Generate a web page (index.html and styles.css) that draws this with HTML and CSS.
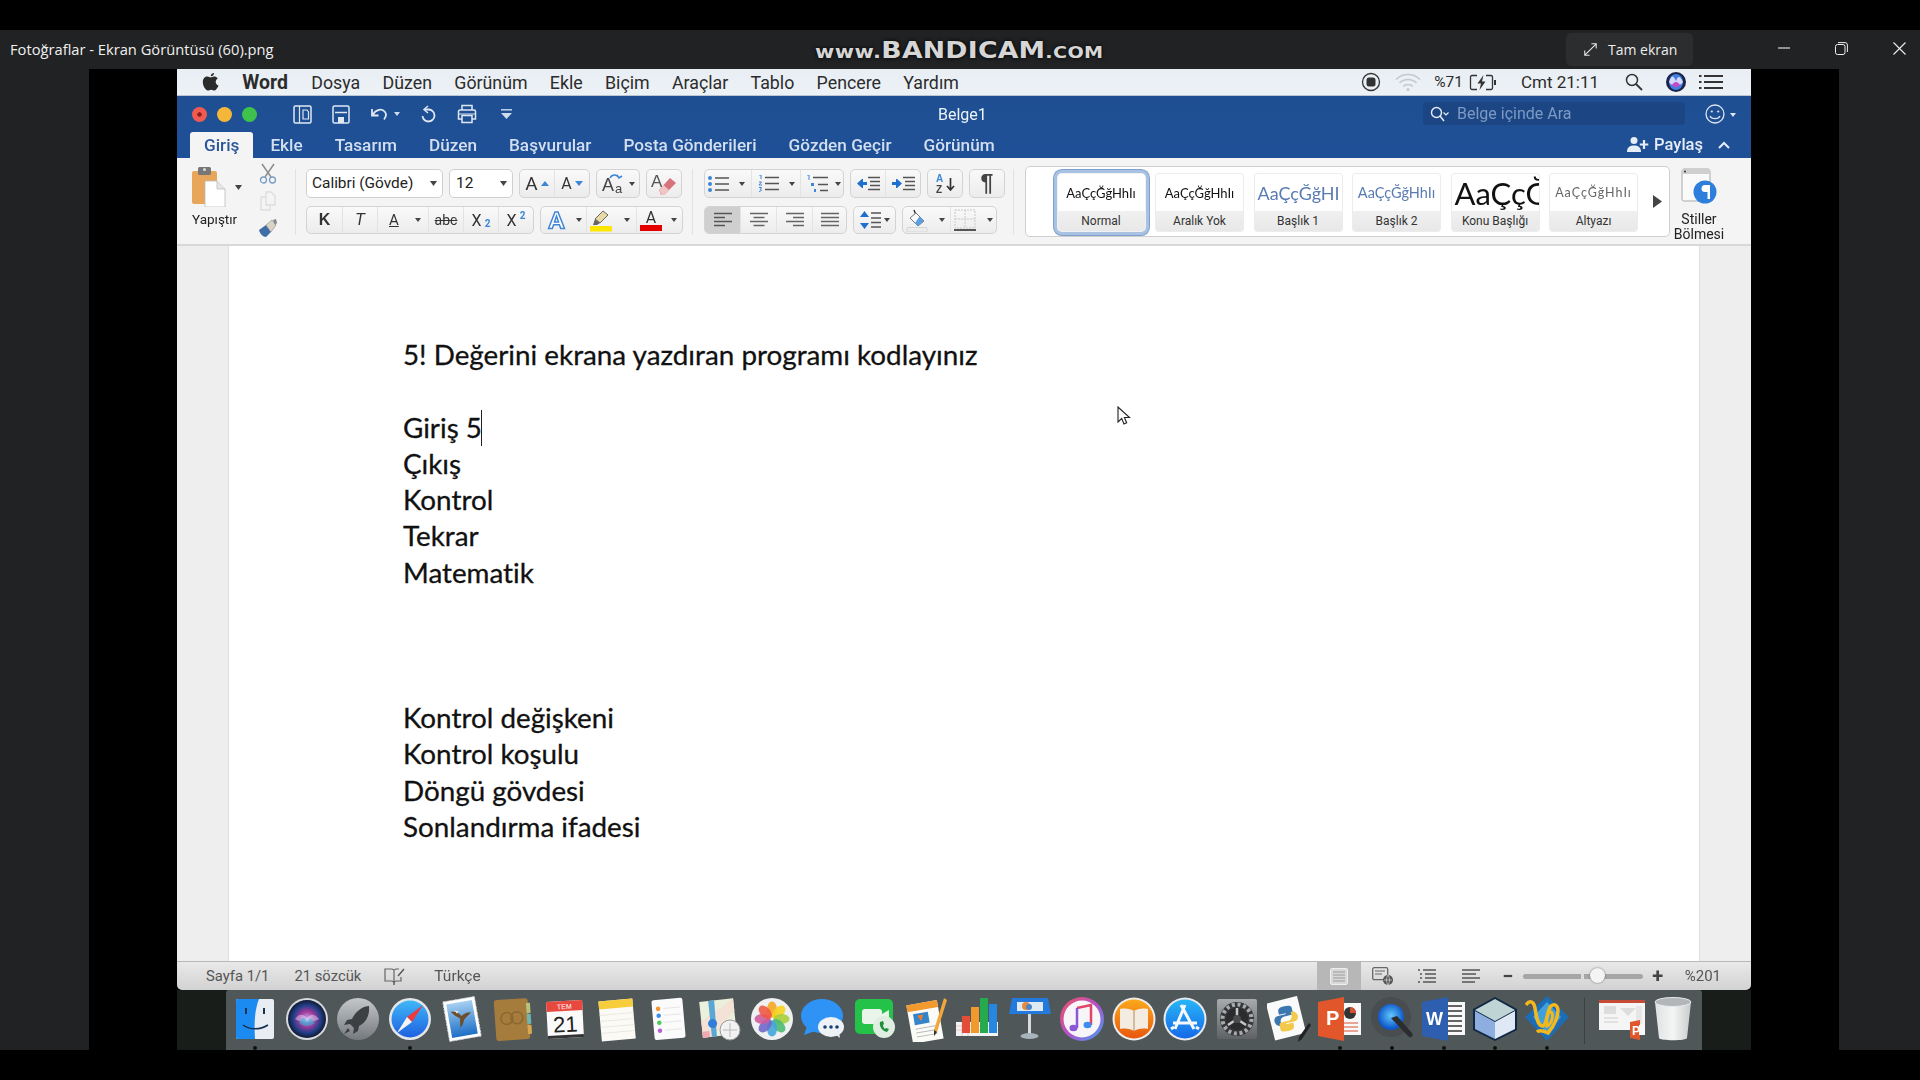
FILE: index.html
```html
<!DOCTYPE html>
<html lang="tr">
<head>
<meta charset="utf-8">
<title>Fotoğraflar - Ekran Görüntüsü (60).png</title>
<link rel="stylesheet" href="styles.css">
</head>
<body>
<svg class="defs" width="0" height="0">
  <defs>
    <symbol id="al" viewBox="0 0 20 16"><path d="M1 1.500h18M1 5.500h11M1 9.500h18M1 13.500h11" stroke="#555" stroke-width="1.600" fill="none"/></symbol>
    <symbol id="ac" viewBox="0 0 20 16"><path d="M1 1.500h18M4.500 5.500h11M1 9.500h18M4.500 13.500h11" stroke="#666" stroke-width="1.600" fill="none"/></symbol>
    <symbol id="ar" viewBox="0 0 20 16"><path d="M1 1.500h18M8 5.500h11M1 9.500h18M8 13.500h11" stroke="#666" stroke-width="1.600" fill="none"/></symbol>
    <symbol id="aj" viewBox="0 0 20 16"><path d="M1 1.500h18M1 5.500h18M1 9.500h18M1 13.500h18" stroke="#666" stroke-width="1.600" fill="none"/></symbol>
  </defs>
</svg>

<div class="topgap"></div>
<header class="winbar">
  <span class="wintitle">Fotoğraflar - Ekran Görüntüsü (60).png</span>
  <div class="watermark"><span class="wm-s">www.</span><span class="wm-b">BANDICAM</span><span class="wm-c">.com</span></div>
  <div class="winright">
    <div class="fullbtn">
      <svg width="15" height="15" viewBox="0 0 17 17"><path d="M2 15L15 2M9.500 2H15V7.500M2 9.500V15H7.500" stroke="#e8e8e8" stroke-width="1.200" fill="none"/></svg>
      <span>Tam ekran</span>
    </div>
    <div class="winctl">
      <div class="wc"><svg width="12" height="12" viewBox="0 0 12 12"><path d="M0 6h12" stroke="#eee" stroke-width="1.100"/></svg></div>
      <div class="wc"><svg width="13" height="13" viewBox="0 0 13 13"><rect x="0.500" y="2.500" width="9.500" height="10" rx="2" fill="none" stroke="#eee"/><path d="M3 .6h7a2.400 2.400 0 0 1 2.400 2.400v7" fill="none" stroke="#eee"/></svg></div>
      <div class="wc"><svg width="13" height="13" viewBox="0 0 13 13"><path d="M.5.5l12 12M12.500.5l-12 12" stroke="#eee" stroke-width="1.100"/></svg></div>
    </div>
  </div>
</header>

<main class="viewer">
  <div class="side side-l"></div>
  <div class="stage">
    <div class="app">
      <div class="menubar">
        <div class="menu-left">
          <svg class="apple" width="17" height="20" viewBox="0 0 17 20"><path d="M12 1c.1 1.500-1.300 3.400-3.200 3.300C8.600 2.600 10.300 1.100 12 1zM8.700 5.500c.8 0 1.900-1 3.500-1 1.100 0 2.600.5 3.500 1.900-3 1.800-2.500 5.900.8 7.200-.7 1.700-2.300 4.900-4 4.900-1.300 0-1.700-.8-3.300-.8s-2.100.8-3.300.8C3.700 18.500.8 13.900.8 10c0-3.700 2.400-5.500 4.500-5.500 1.500 0 2.600 1 3.400 1z" fill="#2b2b2b"/></svg>
          <b class="m-word">Word</b><span>Dosya</span><span>Düzen</span><span>Görünüm</span><span>Ekle</span><span>Biçim</span><span>Araçlar</span><span>Tablo</span><span>Pencere</span><span>Yardım</span>
        </div>
        <div class="menu-right">
          <svg width="20" height="20" viewBox="0 0 20 20"><circle cx="10" cy="10" r="8.500" fill="none" stroke="#333" stroke-width="1.300"/><rect x="5.500" y="5.500" width="9" height="9" rx="2.500" fill="#333"/></svg>
          <svg class="mr-wifi" width="26" height="19" viewBox="0 0 26 19"><path d="M1 6.500a17 17 0 0 1 24 0M4.500 10a12 12 0 0 1 17 0M8 13.500a7 7 0 0 1 10 0" fill="none" stroke="#c4c8cc" stroke-width="1.500"/><circle cx="13" cy="16.500" r="1.500" fill="#c4c8cc"/></svg>
          <span class="mr-pct">%71</span>
          <svg class="mr-bat" width="28" height="17" viewBox="0 0 28 17"><path d="M8 1.500H3a1.500 1.500 0 0 0-1.500 1.500v11A1.500 1.500 0 0 0 3 15.500h5M17 1.500h5a1.500 1.500 0 0 1 1.500 1.500v11a1.500 1.500 0 0 1-1.500 1.500h-5" fill="none" stroke="#333" stroke-width="1.300"/><path d="M14.500 1L8.500 9.500h3.500L10.500 16l6-8.500H13z" fill="#333"/><rect x="25" y="6" width="2" height="5" fill="#333"/></svg>
          <span class="mr-clock">Cmt 21:11</span>
          <svg class="mr-search" width="18" height="18" viewBox="0 0 18 18"><circle cx="7" cy="7" r="5.500" fill="none" stroke="#333" stroke-width="1.500"/><path d="M11 11l6 6" stroke="#333" stroke-width="1.800"/></svg>
          <svg class="mr-siri" width="20" height="20" viewBox="0 0 20 20"><circle cx="10" cy="10" r="10" fill="#1c2347"/><ellipse cx="10" cy="10" rx="7" ry="8" fill="#3f7fe0"/><path d="M3 10c3-7 4-7 7-1 2-6 4-5 7 1-3 5-11 5-14 0z" fill="#d4d8ff"/><path d="M6 13c2-4 6-4 8 0-3 3-6 3-8 0z" fill="#c44bc8"/></svg>
          <svg class="mr-list" width="24" height="16" viewBox="0 0 24 16"><path d="M5 2h19M5 8h19M5 14h19" stroke="#333" stroke-width="2"/><path d="M0 2h2.500M0 8h2.500M0 14h2.500" stroke="#333" stroke-width="2"/></svg>
        </div>
      </div>

      <div class="blue">
        <div class="tbar">
          <div class="traffic"><i class="tl tl-r"></i><i class="tl tl-y"></i><i class="tl tl-g"></i></div>
          <div class="tools">
            <svg width="19" height="19" viewBox="0 0 19 19"><rect x="1" y="1" width="17" height="17" rx="1.500" fill="none" stroke="#dfe7f3" stroke-width="1.500"/><path d="M6.500 1v17M10 5h4l1.500 2v7H10z" fill="none" stroke="#dfe7f3" stroke-width="1.200"/></svg>
            <svg class="t-save" width="18" height="19" viewBox="0 0 18 19"><path d="M1 2.500A1.500 1.500 0 0 1 2.500 1h13A1.500 1.500 0 0 1 17 2.500v14a1.500 1.500 0 0 1-1.500 1.500h-13A1.500 1.500 0 0 1 1 16.500z" fill="none" stroke="#dfe7f3" stroke-width="1.500"/><path d="M3 7.500h12" stroke="#dfe7f3" stroke-width="1.500"/><rect x="6" y="12" width="6" height="6" fill="#dfe7f3"/></svg>
            <svg class="t-undo" width="20" height="16" viewBox="0 0 20 16"><path d="M4 3v6.500h6.500M4.500 9C8 3.500 14 2 17 6c1.500 2 1 5-1 7.500" fill="none" stroke="#dfe7f3" stroke-width="1.800"/></svg>
            <svg class="t-caret" width="6" height="4" viewBox="0 0 6 4"><path d="M0 0h6L3 4z" fill="#cfdcf0"/></svg>
            <svg class="t-redo" width="16" height="19" viewBox="0 0 16 19"><path d="M7 1L3 4.500 7 8" fill="none" stroke="#dfe7f3" stroke-width="1.500"/><path d="M4 4.500h4a6 6 0 1 1-6.500 6.500" fill="none" stroke="#dfe7f3" stroke-width="1.800"/></svg>
            <svg class="t-print" width="20" height="20" viewBox="0 0 20 20"><path d="M5 6V1.500h10V6M5 15H1.500V7.500a1.500 1.500 0 0 1 1.500-1.500h14a1.500 1.500 0 0 1 1.500 1.500V15H15M5 11.500h10V18.500H5z" fill="none" stroke="#dfe7f3" stroke-width="1.500"/><path d="M2 10h16" stroke="#dfe7f3"/></svg>
            <svg class="t-qat" width="11" height="10" viewBox="0 0 11 10"><path d="M0 .8h11" stroke="#cfdcf0" stroke-width="1.400"/><path d="M0 4h11L5.500 10z" fill="#cfdcf0"/></svg>
          </div>
          <div class="doctitle">Belge1</div>
          <div class="searchbox">
            <svg width="19" height="16" viewBox="0 0 19 16"><circle cx="6.500" cy="6.500" r="5" fill="none" stroke="#e6edf7" stroke-width="1.400"/><path d="M10 10l4 5" stroke="#e6edf7" stroke-width="1.500"/><path d="M13.500 6.500l2.500 2.500 2.500-2.500" fill="none" stroke="#e6edf7" stroke-width="1.200"/></svg>
            <span>Belge içinde Ara</span>
          </div>
          <svg class="smile" width="20" height="20" viewBox="0 0 20 20"><circle cx="10" cy="10" r="9" fill="none" stroke="#dfe7f3" stroke-width="1.300"/><circle cx="6.800" cy="7.500" r="1.100" fill="#dfe7f3"/><circle cx="13.200" cy="7.500" r="1.100" fill="#dfe7f3"/><path d="M5 12c1.500 3.500 8.500 3.500 10 0" fill="none" stroke="#dfe7f3" stroke-width="1.300"/></svg>
          <svg class="smile-c" width="6" height="4" viewBox="0 0 6 4"><path d="M0 0h6L3 4z" fill="#dfe7f3"/></svg>
        </div>
        <div class="tabs">
          <div class="tab active">Giriş</div>
          <div class="tab">Ekle</div>
          <div class="tab">Tasarım</div>
          <div class="tab">Düzen</div>
          <div class="tab">Başvurular</div>
          <div class="tab">Posta Gönderileri</div>
          <div class="tab">Gözden Geçir</div>
          <div class="tab">Görünüm</div>
          <div class="share">
            <svg width="22" height="17" viewBox="0 0 22 17"><circle cx="7" cy="4.500" r="3.500" fill="#e6edf7"/><path d="M0 16c0-5 3-6.500 7-6.500s7 1.500 7 6.500z" fill="#e6edf7"/><path d="M17 4v9M12.800 8.500h8.500" stroke="#e6edf7" stroke-width="2.200"/></svg>
            <span>Paylaş</span>
            <svg class="chev" width="12" height="8" viewBox="0 0 12 8"><path d="M1 7l5-5 5 5" fill="none" stroke="#e6edf7" stroke-width="2"/></svg>
          </div>
        </div>
      </div>

      <div class="ribbon">
        <div class="g-paste">
          <div class="paste-main">
            <div class="paste-top">
              <svg width="36" height="40" viewBox="0 0 36 40"><rect x="1" y="4" width="25" height="33" rx="2" fill="#e8a65a"/><rect x="7" y="0" width="13" height="8" rx="1.500" fill="#777"/><circle cx="13.500" cy="2.500" r="1.500" fill="#ddd"/><path d="M14 14h12l8 8v18H14z" fill="#fff" stroke="#bdbdbd" stroke-width=".8"/><path d="M26 14v8h8" fill="#e6e6e6" stroke="#bdbdbd" stroke-width=".8"/></svg>
              <svg class="paste-c" width="7" height="5"><path d="M0 0h7L3.500 5z" fill="#444"/></svg>
            </div>
            <span class="paste-lb">Yapıştır</span>
          </div>
          <div class="paste-side">
            <svg width="18" height="21" viewBox="0 0 18 21"><path d="M3 1l9 13M15 1L6 14" stroke="#8d8d8d" stroke-width="1.500"/><circle cx="4.500" cy="17" r="3" fill="none" stroke="#7b9dc4" stroke-width="1.300"/><circle cx="13.500" cy="17" r="3" fill="none" stroke="#7b9dc4" stroke-width="1.300"/></svg>
            <svg width="16" height="20" viewBox="0 0 16 20"><path d="M6 1h5l4 4v9H6zM1 6h5M1 6v13h9v-5" fill="none" stroke="#ddd" stroke-width="1.300"/></svg>
            <svg width="20" height="20" viewBox="0 0 20 20"><path d="M1 12l7-5 5 7-5 5c-3 0-6-3-7-7z" fill="#3e6da8"/><path d="M8 7l6-5 4 5-5 7z" fill="#d9d3c3" stroke="#888" stroke-width=".6"/><path d="M15 2l3-1 1 4-2 2z" fill="#888"/></svg>
          </div>
        </div>
        <div class="rdiv rdiv-a"></div>
        <div class="rcol">
          <div class="rrow">
            <div class="field f-font"><span>Calibri (Gövde)</span><i class="fc"><svg width="7" height="5"><path d="M0 0h7L3.500 5z" fill="#444"/></svg></i></div>
            <div class="field f-size"><span>12</span><i class="fc"><svg width="7" height="5"><path d="M0 0h7L3.500 5z" fill="#444"/></svg></i></div>
            <div class="strip s71">
              <div class="b w36"><span class="ag1">A</span><svg width="8" height="5"><path d="M0 5h8L4 0z" fill="#3f86d6"/></svg></div>
              <div class="b w35"><span class="ag2">A</span><svg width="8" height="5"><path d="M0 0h8L4 5z" fill="#3f86d6"/></svg></div>
            </div>
            <div class="strip s44"><div class="b grow">
              <svg width="24" height="22" viewBox="0 0 24 22"><text x="0" y="18" class="svt st-a">A</text><text x="13" y="20" class="svt st-a2">a</text><path d="M8 5c2-4 7-4 9 0M15 2l2 3 3-2" fill="none" stroke="#3f86d6" stroke-width="1.600"/></svg>
              <svg width="6" height="4"><path d="M0 0h6L3 4z" fill="#444"/></svg></div></div>
            <div class="strip s36"><div class="b grow">
              <svg width="26" height="24" viewBox="0 0 26 24"><text x="0" y="15" class="svt st-e">A</text><path d="M8 18L19 6l6 5-12 12h-3z" fill="#d8737a"/><path d="M8 18l4.500-5 6 5.500-5 4.500h-3z" fill="#efc5c5"/></svg>
            </div></div>
          </div>
          <div class="rrow">
            <div class="strip s228">
              <div class="b w36 t-k">K</div>
              <div class="b w35 t-t">T</div>
              <div class="b w51 split c-u"><span class="t-u">A</span><svg width="6" height="4"><path d="M0 0h6L3 4z" fill="#444"/></svg></div>
              <div class="b w35 t-abc">abc</div>
              <div class="b w35 t-x">X<sub>2</sub></div>
              <div class="b grow t-x">X<sup>2</sup></div>
            </div>
            <div class="strip s143">
              <div class="b w46 split c-e"><svg width="19" height="20" viewBox="0 0 19 20"><path d="M1.500 18.500L8 2h3l6.500 16.500h-3.800l-1.300-3.700H6.600L5.300 18.500zM7.500 12h4L9.500 6z" fill="#fff" stroke="#3f86d6" stroke-width="1.500"/></svg><svg width="6" height="4"><path d="M0 0h6L3 4z" fill="#444"/></svg></div>
              <div class="b w50 split c-h"><svg width="24" height="23" viewBox="0 0 24 23"><path d="M14 2l5 4-8 8-5-4z" fill="#e9d9a2" stroke="#666"/><path d="M6 10l5 4-3 2H4z" fill="#666"/><rect x="1" y="17" width="22" height="5.500" fill="#ffe600"/></svg><svg width="6" height="4"><path d="M0 0h6L3 4z" fill="#444"/></svg></div>
              <div class="b grow split c-f"><div class="fontc"><span>A</span><i></i></div><svg width="6" height="4"><path d="M0 0h6L3 4z" fill="#444"/></svg></div>
            </div>
          </div>
        </div>
        <div class="rdiv rdiv-b"></div>
        <div class="rcol">
          <div class="rrow">
            <div class="strip s140">
              <div class="b w47 split c-l1"><svg width="21" height="16" viewBox="0 0 21 16"><circle cx="2" cy="2" r="2" fill="#3f86d6"/><circle cx="2" cy="8" r="2" fill="#3f86d6"/><circle cx="2" cy="14" r="2" fill="#3f86d6"/><path d="M7 2h14M7 8h14M7 14h14" stroke="#555" stroke-width="1.600"/></svg><svg width="6" height="4"><path d="M0 0h6L3 4z" fill="#444"/></svg></div>
              <div class="b w49 split c-l2"><svg width="21" height="17" viewBox="0 0 21 17"><path d="M1 0h2v4M1 7h2.500l-2.500 3h3M1 12.500h2.500L2.500 14l1 1.500L1 16.500" fill="none" stroke="#3f86d6" stroke-width="1"/><path d="M7 2.500h14M7 8.500h14M7 14.500h14" stroke="#555" stroke-width="1.600"/></svg><svg width="6" height="4"><path d="M0 0h6L3 4z" fill="#444"/></svg></div>
              <div class="b grow split c-l3"><svg width="24" height="18" viewBox="0 0 24 18"><path d="M1 0h2v5" fill="none" stroke="#3f86d6"/><path d="M5 8h3v3H5zM8 14h2v3H8z" fill="#3f86d6"/><path d="M7 2.500h15M12 9.500h10M14 15.500h8" stroke="#555" stroke-width="1.600"/></svg><svg width="6" height="4"><path d="M0 0h6L3 4z" fill="#444"/></svg></div>
            </div>
            <div class="strip s71">
              <div class="b w36"><svg width="23" height="15" viewBox="0 0 23 15"><path d="M0 7.500L5 3h1v3h4v3H6v3H5z" fill="#1f6fd0"/><path d="M11 1.500h12M13 5.500h10M13 9.500h10M11 13.500h12" stroke="#555" stroke-width="1.500"/></svg></div>
              <div class="b w35"><svg width="23" height="15" viewBox="0 0 23 15"><path d="M10 7.500L5 3H4v3H0v3h4v3h1z" fill="#1f6fd0"/><path d="M11 1.500h12M13 5.500h10M13 9.500h10M11 13.500h12" stroke="#555" stroke-width="1.500"/></svg></div>
            </div>
            <div class="strip s36"><div class="b grow"><svg width="21" height="21" viewBox="0 0 21 21"><text x="1" y="9" class="svt st-az">A</text><text x="1" y="20" class="svt st-azz">Z</text><path d="M15.500 5v12M12 13l3.500 4 3.500-4" fill="none" stroke="#333" stroke-width="1.700"/></svg></div></div>
            <div class="strip s36"><div class="b grow pil">¶</div></div>
          </div>
          <div class="rrow">
            <div class="strip s143">
              <div class="b w36 on"><svg width="20" height="16"><use href="#al"/></svg></div>
              <div class="b w36"><svg width="20" height="16"><use href="#ac"/></svg></div>
              <div class="b w36"><svg width="20" height="16"><use href="#ar"/></svg></div>
              <div class="b grow"><svg width="20" height="16"><use href="#aj"/></svg></div>
            </div>
            <div class="strip s43"><div class="b grow"><svg width="21" height="20" viewBox="0 0 21 20"><path d="M4.500 1L9 7H0zM4.500 19L0 13h9z" fill="#1f6fd0"/><path d="M11 3h10M11 8h10M11 12.500h10M11 17h10" stroke="#555" stroke-width="1.500"/></svg><svg width="6" height="4"><path d="M0 0h6L3 4z" fill="#444"/></svg></div></div>
            <div class="strip s95">
              <div class="b w48 split c-s"><svg width="22" height="23" viewBox="0 0 22 23"><path d="M8 1l2 5" stroke="#222" stroke-width="1.300"/><path d="M10 4l8 8-6 5-8-8z" fill="#fafafa" stroke="#777"/><path d="M13.500 7.500l4.500 4.500-6 5-3-3z" fill="#5c9fe0"/><rect x="1" y="18.500" width="20" height="4.500" rx="1" fill="#ececec" stroke="#d5d5d5"/></svg><svg width="6" height="4"><path d="M0 0h6L3 4z" fill="#444"/></svg></div>
              <div class="b grow split c-s"><svg width="22" height="22" viewBox="0 0 22 22"><path d="M1 1h20v18H1zM11 1v18M1 10h20" fill="none" stroke="#c8c8c8" stroke-dasharray="2 1"/><path d="M0 21h22" stroke="#555" stroke-width="2"/></svg><svg width="6" height="4"><path d="M0 0h6L3 4z" fill="#444"/></svg></div>
            </div>
          </div>
        </div>
        <div class="rdiv rdiv-c"></div>
        <div class="styles">
          <div class="scard sel"><div class="prev pv-n">AaÇçĞğHhIı</div><div class="lbl">Normal</div></div>
          <div class="scard"><div class="prev pv-n">AaÇçĞğHhIı</div><div class="lbl">Aralık Yok</div></div>
          <div class="scard"><div class="prev pv-h1">AaÇçĞğHI</div><div class="lbl">Başlık 1</div></div>
          <div class="scard"><div class="prev pv-h2">AaÇçĞğHhIı</div><div class="lbl">Başlık 2</div></div>
          <div class="scard"><div class="prev pv-t">AaÇçĞ</div><div class="lbl">Konu Başlığı</div></div>
          <div class="scard"><div class="prev pv-s">AaÇçĞğHhIı</div><div class="lbl">Altyazı</div></div>
          <svg class="more" width="9" height="13" viewBox="0 0 9 13"><path d="M0 0l9 6.500L0 13z" fill="#444"/></svg>
        </div>
        <div class="pane">
          <svg width="36" height="36" viewBox="0 0 36 36"><rect x="1" y="1" width="28" height="32" rx="2" fill="#fafafa" stroke="#aaa"/><rect x="1" y="1" width="28" height="5" fill="#cfcfcf"/><circle cx="4" cy="3.500" r="1" fill="#333"/><circle cx="24" cy="24" r="11.500" fill="#2e7fdb"/><path d="M26 17h3v14h-2.500v-7H24a3.500 3.500 0 0 1 0-7z" fill="#fff"/></svg>
          <span>Stiller<br>Bölmesi</span>
        </div>
      </div>

      <div class="docarea">
        <article class="page">
          <p>5! Değerini ekrana yazdıran programı kodlayınız</p>
          <p>&nbsp;</p>
          <p class="caretline">Giriş 5<i class="textcaret"></i></p>
          <p>Çıkış</p>
          <p>Kontrol</p>
          <p>Tekrar</p>
          <p>Matematik</p>
          <p>&nbsp;</p>
          <p>&nbsp;</p>
          <p>&nbsp;</p>
          <p>Kontrol değişkeni</p>
          <p>Kontrol koşulu</p>
          <p>Döngü gövdesi</p>
          <p>Sonlandırma ifadesi</p>
        </article>
      </div>

      <div class="status">
        <div class="st-left">
          <span class="sl-a">Sayfa 1/1</span>
          <span class="sl-b">21 sözcük</span>
          <svg class="sl-book" width="21" height="17" viewBox="0 0 21 17"><path d="M1 1h7l2 1v12l-2-1H1zM10 2l2-1h3M10 14l2-1h5V9" fill="none" stroke="#666" stroke-width="1.200"/><path d="M10 14v3M14 8l6-7" stroke="#555" stroke-width="1.400"/></svg>
          <span class="sl-c">Türkçe</span>
        </div>
        <div class="st-right">
          <div class="vbtn on"><svg width="18" height="17" viewBox="0 0 18 17"><rect x=".5" y=".5" width="17" height="16" rx="1.500" fill="#d9d9d9" stroke="#eee"/><path d="M3 4h12M3 7h12M3 10h12M3 13h12" stroke="#999"/></svg></div>
          <div class="vbtn"><svg width="21" height="18" viewBox="0 0 21 18"><rect x=".7" y=".7" width="15" height="12" rx="1.500" fill="none" stroke="#666" stroke-width="1.300"/><path d="M3 4h10M3 7h7" stroke="#666"/><circle cx="16" cy="13" r="5" fill="#555"/><path d="M12 13h8M16 8c-2 3-2 7 0 10M16 8c2 3 2 7 0 10" stroke="#ddd" stroke-width=".7" fill="none"/></svg></div>
          <div class="vbtn"><svg width="18" height="14" viewBox="0 0 18 14"><path d="M0 1h2M5 1h13M2 5h2M7 5h11M2 9h2M7 9h11M0 13h2M5 13h13" stroke="#555" stroke-width="1.400"/></svg></div>
          <div class="vbtn"><svg width="18" height="14" viewBox="0 0 18 14"><path d="M0 1h18M0 5h14M0 9h18M0 13h13" stroke="#555" stroke-width="1.400"/></svg></div>
          <div class="zoomctl">
            <span class="z-b">−</span>
            <div class="slider"><i class="tick"></i><i class="thumb"></i></div>
            <span class="z-b">+</span>
            <span class="z-v">%201</span>
          </div>
        </div>
      </div>

      <div class="dockrow">
        <div class="dock">
          <div class="di run"><svg width="44" height="46" viewBox="0 0 44 46"><rect x="3" y="3" width="38" height="40" rx="2" fill="#e8edf3"/><path d="M3 5a2 2 0 0 1 2-2h21c-4 10-5 22-4 40H5a2 2 0 0 1-2-2z" fill="#1b8bf2"/><path d="M13 12v6M31 12v6" stroke="#16334f" stroke-width="2"/><path d="M10 29c7 5 17 5 25 0" fill="none" stroke="#16334f" stroke-width="1.500"/></svg></div>
          <div class="di"><svg width="44" height="46" viewBox="0 0 44 46"><defs><radialGradient id="sg" cx=".5" cy=".5" r=".5"><stop offset="0" stop-color="#c9b2ee"/><stop offset=".4" stop-color="#a43a9c"/><stop offset=".72" stop-color="#22408a"/><stop offset="1" stop-color="#111a32"/></radialGradient></defs><circle cx="22" cy="23" r="21" fill="#d8dadd"/><circle cx="22" cy="23" r="19" fill="url(#sg)"/><path d="M10 23c4-5 8-6 12 0 3-6 8-5 12 0-5 4-19 4-24 0z" fill="#e9e4ff" opacity=".45"/><path d="M14 27c3-6 6-7 8-1 3-5 5-4 8 1-5 4-11 4-16 0z" fill="#2bb4d8" opacity=".6"/></svg></div>
          <div class="di"><svg width="44" height="46" viewBox="0 0 44 46"><defs><linearGradient id="lg" x1="0" y1="0" x2="0" y2="1"><stop offset="0" stop-color="#c5c8cb"/><stop offset="1" stop-color="#75797d"/></linearGradient></defs><circle cx="22" cy="23" r="21" fill="url(#lg)"/><path d="M33 10c-9 1-14 7-17 13l-5 1-3 5 6-1 4 4-1 6 5-3 1-5c6-3 11-9 10-20z" fill="#3d4043"/><path d="M12 32l-4 6 6-3z" fill="#3d4043"/></svg></div>
          <div class="di run"><svg width="44" height="46" viewBox="0 0 44 46"><defs><linearGradient id="sf" x1="0" y1="0" x2="0" y2="1"><stop offset="0" stop-color="#3fb7f7"/><stop offset="1" stop-color="#1e60e0"/></linearGradient></defs><circle cx="22" cy="23" r="21" fill="#e4e6e9"/><circle cx="22" cy="23" r="18.500" fill="url(#sf)"/><path d="M35 9L19 21l5 5z" fill="#f0393b"/><path d="M9 37l15-11-5-5z" fill="#f4f4f4"/></svg></div>
          <div class="di"><svg width="44" height="46" viewBox="0 0 44 46"><g transform="rotate(-10 22 23)"><rect x="6" y="3" width="32" height="40" fill="#fff" stroke="#cfd4da" stroke-dasharray="2 1"/><defs><linearGradient id="ml" x1="0" y1="0" x2="0" y2="1"><stop offset="0" stop-color="#a5cff2"/><stop offset="1" stop-color="#1d6fc6"/></linearGradient></defs><rect x="9" y="6" width="26" height="34" fill="url(#ml)"/><path d="M12 14c5 0 8 2 10 6 3-2 7-3 10-2-3 3-6 4-8 6-1 3-3 6-5 7 0-3 1-6 1-9-3-2-6-5-8-8z" fill="#6d4f2e"/><path d="M16 13l4 2-2 2z" fill="#efe6d6"/></g></svg></div>
          <div class="di"><svg width="44" height="46" viewBox="0 0 44 46"><g transform="rotate(-4 22 23)"><rect x="4" y="3" width="34" height="41" rx="3" fill="#a67c3d"/><rect x="36" y="8" width="4" height="10" fill="#b9c27a"/><rect x="36" y="19" width="4" height="10" fill="#6fb6b0"/><rect x="36" y="30" width="4" height="9" fill="#d6a950"/><circle cx="16" cy="22" r="6" fill="none" stroke="#8c672f" stroke-width="1.500"/><circle cx="26" cy="22" r="6" fill="none" stroke="#8c672f" stroke-width="1.500"/></g></svg></div>
          <div class="di"><svg width="44" height="46" viewBox="0 0 44 46"><g transform="rotate(-3 22 23)"><rect x="4" y="5" width="36" height="37" fill="#fafafa"/><rect x="4" y="39" width="36" height="3" fill="#333"/><path d="M4 5h36v10H4z" fill="#e8483d"/><text x="22" y="13" class="svt cal-m">TEM</text><text x="22" y="36" class="svt cal-d">21</text></g></svg></div>
          <div class="di"><svg width="44" height="46" viewBox="0 0 44 46"><g transform="rotate(-5 22 23)"><rect x="5" y="4" width="34" height="40" fill="#fbfaf5"/><rect x="5" y="4" width="34" height="8" fill="#f7cd3c"/><path d="M5 18h34M5 24h34M5 30h34M5 36h34" stroke="#e3e1d8" stroke-width=".7"/></g></svg></div>
          <div class="di"><svg width="44" height="46" viewBox="0 0 44 46"><g transform="rotate(-5 22 23)"><rect x="7" y="3" width="31" height="40" rx="2" fill="#fbfbfb"/><circle cx="13" cy="12" r="2.300" fill="#f2962f"/><circle cx="13" cy="19" r="2.300" fill="#3d8cf0"/><circle cx="13" cy="26" r="2.300" fill="#4ecb5a"/><circle cx="13" cy="34" r="2.300" fill="#b45fd2"/><path d="M18 12h17M18 19h17M18 26h17M18 34h17" stroke="#e6e6e6"/></g></svg></div>
          <div class="di"><svg width="44" height="46" viewBox="0 0 44 46"><g transform="rotate(-6 20 22)"><rect x="3" y="4" width="34" height="36" fill="#eaf0dc"/><path d="M3 24l34-20v12L12 40H3z" fill="#f3e2d5"/><path d="M12 4h6l-1 36h-5z" fill="#5aa7d6"/><circle cx="14" cy="27" r="4.500" fill="#2f7fd8"/><path d="M3 34h7v6H3z" fill="#f0a9b0"/></g><circle cx="32" cy="34" r="10" fill="#f2f2f2" stroke="#999"/><path d="M32 27v14M25 34h14" stroke="#bbb"/></svg></div>
          <div class="di"><svg width="44" height="46" viewBox="0 0 44 46"><circle cx="22" cy="23" r="21" fill="#eef0f1"/><g transform="translate(22 23)"><ellipse rx="5" ry="8" cy="-9.500" fill="#f5a623" opacity=".9"/><ellipse rx="5" ry="8" cy="-9.500" transform="rotate(45)" fill="#f7d21e" opacity=".9"/><ellipse rx="5" ry="8" cy="-9.500" transform="rotate(90)" fill="#a7cf3a" opacity=".9"/><ellipse rx="5" ry="8" cy="-9.500" transform="rotate(135)" fill="#4dba74" opacity=".9"/><ellipse rx="5" ry="8" cy="-9.500" transform="rotate(180)" fill="#44a5dc" opacity=".9"/><ellipse rx="5" ry="8" cy="-9.500" transform="rotate(225)" fill="#7367c9" opacity=".9"/><ellipse rx="5" ry="8" cy="-9.500" transform="rotate(270)" fill="#cf5b9d" opacity=".9"/><ellipse rx="5" ry="8" cy="-9.500" transform="rotate(315)" fill="#ef5a45" opacity=".9"/></g></svg></div>
          <div class="di"><svg width="44" height="46" viewBox="0 0 44 46"><ellipse cx="21" cy="20" rx="21" ry="17" fill="#2f93f5"/><path d="M6 30l-3 9 11-4z" fill="#2f93f5"/><ellipse cx="30" cy="31" rx="13" ry="10" fill="#eef2f7"/><path d="M34 38l5 4-1-6z" fill="#eef2f7"/><circle cx="24" cy="31" r="1.800" fill="#173f6d"/><circle cx="30" cy="31" r="1.800" fill="#173f6d"/><circle cx="36" cy="31" r="1.800" fill="#173f6d"/></svg></div>
          <div class="di"><svg width="44" height="46" viewBox="0 0 44 46"><rect x="2" y="3" width="38" height="35" rx="5" fill="#25c24a"/><rect x="9" y="13" width="20" height="15" rx="3" fill="#e9f4ea"/><path d="M29 18l7-4v13l-7-4z" fill="#e9f4ea"/><circle cx="31" cy="31" r="11" fill="#dfeee1"/><path d="M27 26c-1 4 2 9 7 10l2-3-3-1-1 1c-1-1-2-2-2-4l1-1-1-3z" fill="#1c8f3a"/></svg></div>
          <div class="di"><svg width="44" height="46" viewBox="0 0 44 46"><g transform="rotate(-10 22 23)"><rect x="4" y="6" width="31" height="39" fill="#fbfbf7"/><path d="M4 6h31v7H4z" fill="#f29a2e"/><rect x="9" y="16" width="15" height="11" fill="#3583c9"/><path d="M13 18l6 0-3 6z" fill="#ef7d2b"/><path d="M9 31h21M9 35h21M9 39h21" stroke="#bbb"/></g><path d="M39 2l3 2-10 32-3 4 0-6z" fill="#f2a63b"/><path d="M29 34l3 2-3 4z" fill="#333"/></svg></div>
          <div class="di"><svg width="44" height="46" viewBox="0 0 44 46"><path d="M0 26h42v14H0z" fill="#f3f3f3"/><path d="M0 30h42M0 34h42M6 26v14M12 26v14" stroke="#dd9b9b" stroke-width=".5"/><rect x="6" y="20" width="8" height="17" fill="#e44c3a"/><rect x="15" y="11" width="8" height="26" fill="#f09a2c"/><rect x="24" y="2" width="8" height="35" fill="#27a94e"/><rect x="33" y="8" width="8" height="29" fill="#2687e0"/></svg></div>
          <div class="di"><svg width="44" height="46" viewBox="0 0 44 46"><path d="M4 2h36l3 16H1z" fill="#2479dc"/><rect x="9" y="6" width="26" height="9" fill="#dfe9f2"/><circle cx="18" cy="10" r="4" fill="#e88a3c"/><circle cx="21" cy="11" r="3" fill="#4a87c9"/><path d="M20 18h3v20h-3z" fill="#d8dbde"/><ellipse cx="21.500" cy="40" rx="9" ry="3" fill="#a7b4bd"/></svg></div>
          <div class="di"><svg width="44" height="46" viewBox="0 0 44 46"><defs><linearGradient id="it" x1="0" y1="0" x2="1" y2="1"><stop offset="0" stop-color="#f2515f"/><stop offset=".5" stop-color="#b552c9"/><stop offset="1" stop-color="#3fa0f2"/></linearGradient></defs><circle cx="22" cy="23" r="22" fill="url(#it)"/><circle cx="22" cy="23" r="18.500" fill="#f7f5f8"/><path d="M17 12l14-3v20" fill="none" stroke="#e04468" stroke-width="2.500"/><path d="M17 12v20" stroke="#8c57d6" stroke-width="2.500"/><ellipse cx="13.500" cy="32" rx="4" ry="3.200" fill="#8c57d6"/><ellipse cx="27.500" cy="29" rx="4" ry="3.200" fill="#3d8cf0"/></svg></div>
          <div class="di"><svg width="44" height="46" viewBox="0 0 44 46"><defs><linearGradient id="bk" x1="0" y1="0" x2="0" y2="1"><stop offset="0" stop-color="#fba81a"/><stop offset="1" stop-color="#e9570f"/></linearGradient></defs><circle cx="22" cy="23" r="21.500" fill="#eee"/><circle cx="22" cy="23" r="19.500" fill="url(#bk)"/><path d="M8 13c6-1 11 0 14 2 3-2 8-3 14-2v20c-6-1-11 0-14 2-3-2-8-3-14-2z" fill="#f4ece0"/><path d="M22 15v20" stroke="#b08a60"/></svg></div>
          <div class="di"><svg width="44" height="46" viewBox="0 0 44 46"><defs><linearGradient id="as" x1="0" y1="0" x2="0" y2="1"><stop offset="0" stop-color="#27b5f7"/><stop offset="1" stop-color="#1669e8"/></linearGradient></defs><circle cx="22" cy="23" r="21.500" fill="#e9ebee"/><circle cx="22" cy="23" r="19.500" fill="url(#as)"/><path d="M22 9L12 33M18 9l13 24M10 27h24M8 33l3-2M36 33l-3-2" fill="none" stroke="#f5f8fb" stroke-width="3"/></svg></div>
          <div class="di"><svg width="44" height="46" viewBox="0 0 44 46"><defs><linearGradient id="sp" x1="0" y1="0" x2="0" y2="1"><stop offset="0" stop-color="#a8abae"/><stop offset="1" stop-color="#5f6265"/></linearGradient></defs><rect x="2" y="3" width="40" height="40" rx="2" fill="url(#sp)"/><circle cx="22" cy="23" r="17" fill="#35383a"/><circle cx="22" cy="23" r="14.500" fill="none" stroke="#aaa" stroke-width="4" stroke-dasharray="3 2.700"/><circle cx="22" cy="23" r="11" fill="#2a2c2e"/><path d="M22 23V12M22 23l-9 6M22 23l9 6" stroke="#c8c8c8" stroke-width="2.500"/><circle cx="22" cy="23" r="4" fill="#4a4c4e"/></svg></div>
          <div class="di"><svg width="44" height="46" viewBox="0 0 44 46"><g transform="rotate(-14 20 22)"><rect x="3" y="3" width="32" height="38" fill="#fafafa"/><path d="M19 10c-5 0-6 2-6 5v2h7v1h-9c-3 0-4 3-4 5s2 5 4 5h2v-4c0-2 2-4 4-4h7c2 0 3-1 3-3v-4c0-2-3-3-8-3z" fill="#3b77b0"/><path d="M19 35c5 0 6-2 6-5v-2h-7v-1h9c3 0 4-3 4-5s-2-5-4-5h-2v4c0 2-2 4-4 4h-7c-2 0-3 1-3 3v4c0 2 3 3 8 3z" fill="#f3c94b"/></g><path d="M42 27l2 2-9 14-4 3 1-5z" fill="#222"/></svg></div>
          <div class="di run"><svg width="44" height="46" viewBox="0 0 44 46"><rect x="20" y="7" width="23" height="32" fill="#f8f8f8"/><circle cx="32" cy="17" r="6" fill="#333"/><path d="M32 17v-6a6 6 0 0 1 6 6z" fill="#d85032"/><path d="M24 27h16M24 31h16M24 35h16" stroke="#d85032" stroke-width="1.200"/><path d="M0 6l26-5v44L0 40z" fill="#e1572b"/><text x="8" y="29" class="svt ppt-p">P</text></svg></div>
          <div class="di run"><svg width="44" height="46" viewBox="0 0 44 46"><defs><radialGradient id="qt" cx=".5" cy=".45" r=".5"><stop offset="0" stop-color="#63c7ff"/><stop offset="1" stop-color="#0d58c9"/></radialGradient></defs><circle cx="21" cy="21" r="20" fill="#4a4d50"/><circle cx="21" cy="21" r="13" fill="url(#qt)"/><path d="M21 22l17 18c3 3 6 0 4-3L27 20z" fill="#2b2d2f"/></svg></div>
          <div class="di run"><svg width="44" height="46" viewBox="0 0 44 46"><rect x="20" y="6" width="23" height="33" fill="#f8f8f8"/><path d="M24 10h16M24 15h16M24 20h16M24 25h16M24 30h16M24 35h16" stroke="#333" stroke-width="1.500"/><path d="M0 6l26-5v44L0 40z" fill="#2d5eb0"/><text x="4" y="29" class="svt w-w">W</text></svg></div>
          <div class="di run"><svg width="44" height="46" viewBox="0 0 44 46"><path d="M22 1l22 12v21L22 45 0 34V13z" fill="#0f2844"/><path d="M22 3l20 11-20 11L2 14z" fill="#bfd4d5"/><path d="M2 15l20 11v17L2 33z" fill="#8eaee0"/><path d="M42 15L22 26v17l20-10z" fill="#dfe8f5"/></svg></div>
          <div class="di run"><svg width="44" height="46" viewBox="0 0 44 46"><path d="M22 0l22 21-22 24L0 21z" fill="#1c6db6"/><path d="M22 6l14 15-14 16L8 21z" fill="#3fa0dc"/><path d="M1 9c4-6 8-3 9 3 1 6 2 17 7 18s5-17 9-20 7 0 7 5-3 14-10 22c-4-2-9-3-11-1" fill="none" stroke="#f4b81d" stroke-width="3.500"/><path d="M22 30c-1-9 1-15 4-14 3 2 1 12-4 14z" fill="none" stroke="#f4b81d" stroke-width="3"/></svg></div>
          <div class="dsep"></div>
          <div class="di wide"><svg width="48" height="46" viewBox="0 0 48 46"><rect x="1" y="6" width="46" height="28" fill="#f5f5f5"/><rect x="1" y="4" width="46" height="3" fill="#c54a38"/><path d="M6 10h12v8H6zM22 12l8 8 8-8z" fill="#ddd"/><path d="M38 10h6v18h-6z" fill="#e6e6e6"/><path d="M6 22h14M6 26h14" stroke="#ccc"/><path d="M32 26l10-2v20l-10-2z" fill="#e1572b"/><rect x="41" y="29" width="6" height="10" fill="#f8f8f8"/><text x="34" y="39" class="svt ppt-s">P</text></svg></div>
          <div class="di"><svg width="40" height="46" viewBox="0 0 40 46"><defs><linearGradient id="tr" x1="0" y1="0" x2="1" y2="0"><stop offset="0" stop-color="#dfe1e2"/><stop offset=".5" stop-color="#f4f5f5"/><stop offset="1" stop-color="#c8cbcc"/></linearGradient></defs><path d="M2 6l4 36c0 3 28 3 28 0l4-36z" fill="url(#tr)"/><ellipse cx="20" cy="6" rx="18" ry="4.500" fill="#b2b6b8" stroke="#e8e9ea"/></svg></div>
        </div>
      </div>
    </div>
  </div>
  <div class="side side-r"></div>
  <svg class="cursor" width="14" height="20" viewBox="0 0 14 20"><path d="M1 1v15l3.700-3.500 2.300 5.500 2.700-1.200-2.300-5.300H12.500z" fill="#fff" stroke="#222" stroke-width="1.100"/></svg>
</main>
</body>
</html>
```
FILE: styles.css
```css
* { box-sizing: border-box; }
html, body { margin: 0; height: 100%; }
body { width: 1920px; height: 1080px; overflow: hidden; background: #000; font-family: "Roboto", "Liberation Sans", sans-serif; }
.defs { position: absolute; }
svg { display: block; flex: none; }
.topgap { height: 30px; }

/* viewer title bar */
.winbar { height: 39px; background: #202223; display: flex; align-items: center; justify-content: space-between; position: relative; padding-left: 10px; color: #f0f0f0; }
.wintitle { font: 14.700px "Open Sans", sans-serif; margin-top: -2px; }
.watermark { position: absolute; left: 815px; top: 7px; display: flex; align-items: baseline; color: #d6d6d6; font-family: "DejaVu Sans", sans-serif; font-weight: bold; text-shadow: 0 0 4px #000; white-space: nowrap; height: 30px; transform: scaleX(1.16); transform-origin: left; }
.wm-s { font-size: 18px; letter-spacing: .4px; }
.wm-b { font-size: 23px; letter-spacing: .2px; }
.wm-c { font-size: 16.500px; text-transform: uppercase; letter-spacing: .3px; }
.winright { display: flex; align-items: center; height: 100%; }
.fullbtn { width: 127px; height: 33px; margin-right: 70px; background: #2b2d2e; border-radius: 5px; display: flex; align-items: center; gap: 10px; padding-left: 17px; font: 14px "Open Sans", sans-serif; color: #eee; }
.winctl { display: flex; height: 100%; gap: 15.500px; }
.wc { width: 42px; display: flex; align-items: center; justify-content: center; padding-bottom: 3px; }

/* layout below */
.viewer { display: flex; height: 981px; position: relative; }
.side { background: #202223; }
.side-l { width: 89px; }
.side-r { width: 81px; }
.stage { flex: 1; background: #000; padding: 0 88px; }
.app { height: 981px; display: flex; flex-direction: column; filter: blur(.45px); }

/* mac menu bar */
.menubar { height: 27px; background: linear-gradient(#e8eef4, #edf2f6); display: flex; justify-content: space-between; align-items: center; color: #2c2c2c; font-size: 17.800px; border-bottom: 1px solid #bcc6d2; }
.menu-left { display: flex; align-items: center; gap: 22.300px; padding-left: 25px; }
.apple { margin-right: 1px; }
.m-word { font-weight: 700; font-size: 19.500px; margin-right: 1px; }
.menu-right { display: flex; align-items: center; padding-right: 28px; }
.mr-wifi { margin-left: 14px; }
.mr-pct { margin-left: 13px; font-size: 15.500px; }
.mr-bat { margin-left: 6px; }
.mr-clock { margin-left: 24px; font-size: 17px; }
.mr-search { margin-left: 26px; }
.mr-siri { margin-left: 23px; }
.mr-list { margin-left: 13px; }

/* blue band */
.blue { height: 62px; background: linear-gradient(#1f4f92, #1f5097); display: flex; flex-direction: column; }
.tbar { height: 36px; display: flex; align-items: center; position: relative; padding-left: 15px; }
.traffic { display: flex; gap: 10px; }
.tl { display: block; width: 15px; height: 15px; border-radius: 50%; }
.tl-r { background: radial-gradient(circle, #8c2018 18%, #f05a50 24%); }
.tl-y { background: #f4b73a; }
.tl-g { background: #3ec24c; }
.tools { display: flex; align-items: center; margin-left: 36px; }
.t-save { margin-left: 20px; }
.t-undo { margin-left: 18px; }
.t-caret { margin-left: 6px; }
.t-redo { margin-left: 21px; }
.t-print { margin-left: 20px; }
.t-qat { margin-left: 24px; }
.doctitle { position: absolute; left: 761px; width: 48px; text-align: center; color: #eef3fa; font-size: 16px; }
.searchbox { position: absolute; left: 1246px; top: 6px; width: 262px; height: 23px; background: #1c4683; border-radius: 4px; display: flex; align-items: center; gap: 8px; padding-left: 7px; color: #7e99c4; font-size: 16px; }
.smile { position: absolute; left: 1528px; top: 8px; }
.smile-c { position: absolute; left: 1553px; top: 17px; }
.tabs { flex: 1; display: flex; align-items: flex-end; padding-left: 13px; position: relative; }
.tab { height: 26px; display: flex; align-items: center; padding-bottom: 1px; margin-right: 32px; color: #d3dff0; font-size: 17.200px; font-weight: 500; }
.tab.active { background: #f4f4f4; color: #2b579a; border-radius: 3px 3px 0 0; padding: 0 14px 1px; margin-right: 17px; }
.share { margin-left: auto; height: 26px; display: flex; align-items: center; padding-bottom: 1px; color: #e6edf7; font-size: 16.500px; font-weight: 500; padding-right: 21px; gap: 5px; }
.chev { margin-left: 10px; }

/* ribbon */
.ribbon { height: 88px; background: #f4f4f4; border-bottom: 2px solid #d8d8d8; display: flex; align-items: flex-start; padding-top: 11px; position: relative; }
.g-paste { width: 118px; height: 72px; display: flex; padding-left: 14px; }
.paste-main { width: 62px; display: flex; flex-direction: column; }
.paste-top { display: flex; align-items: center; margin-top: -2px; }
.paste-c { margin-left: 8px; }
.paste-lb { font-size: 13.500px; color: #222; margin-top: 4px; margin-left: 1px; }
.paste-side { display: flex; flex-direction: column; align-items: center; gap: 7px; width: 30px; margin-top: -6px; }
.rdiv { width: 1px; height: 66px; background: #e2e2e2; }
.rdiv-a { margin-right: 10px; }
.rdiv-b { margin: 0 11px 0 9px; }
.rdiv-c { margin: 0 11px 0 8px; }
.rcol { display: flex; flex-direction: column; gap: 8px; }
.rrow { display: flex; gap: 6px; height: 29px; }
.rrow + .rrow { height: 28px; }
.field { height: 29px; background: #fff; border: 1px solid #cfcfcf; border-radius: 5px; display: flex; align-items: center; justify-content: space-between; padding-left: 5px; padding-bottom: 1px; font-size: 15.400px; color: #222; }
.f-font { width: 137px; }
.f-size { width: 64px; padding-left: 6px; }
.fc { height: 100%; width: 18px; display: flex; align-items: center; justify-content: center; font-style: normal; }
.strip { height: 100%; display: flex; background: linear-gradient(#f9f9f9, #ececec); border: 1px solid #d3d3d3; border-radius: 5px; overflow: hidden; }
.s71 { width: 71px; } .s44 { width: 44px; } .s36 { width: 36px; } .s228 { width: 228px; } .s143 { width: 143px; } .s140 { width: 140px; } .s43 { width: 43px; } .s95 { width: 95px; }
.b { display: flex; align-items: center; justify-content: center; gap: 3px; border-right: 1px solid #e3e3e3; color: #333; }
.b:last-child { border-right: 0; }
.grow { flex: 1; }
.w35 { width: 35px; } .w36 { width: 36px; } .w46 { width: 46px; } .w47 { width: 47px; } .w48 { width: 48px; } .w49 { width: 49px; } .w50 { width: 50px; } .w51 { width: 51px; }
.b.on { background: #cfcfcf; }
.b.split { justify-content: flex-start; }
.c-u { padding-left: 11px; gap: 16px; }
.c-e { padding-left: 6px; gap: 10px; }
.c-h { padding-left: 2px; gap: 11px; }
.c-f { padding-left: 4px; gap: 10px; }
.c-l1 { padding-left: 3px; gap: 10px; }
.c-l2 { padding-left: 6px; gap: 10px; }
.c-l3 { padding-left: 5px; gap: 5px; }
.c-s { padding-left: 3px; gap: 11px; }
.ag1 { font-size: 19px; color: #333; } .ag2 { font-size: 16px; color: #333; }
.svt { font-family: "Liberation Sans", sans-serif; }
.st-a { font-size: 18px; fill: #444; } .st-a2 { font-size: 13px; fill: #444; }
.st-e { font-size: 17px; fill: #555; }
.st-az { font-size: 10px; fill: #3f86d6; font-weight: bold; } .st-azz { font-size: 10px; fill: #444; font-weight: bold; }
.t-k { font: bold 16px "Liberation Sans", sans-serif; }
.t-t { font: italic 16px "Liberation Sans", sans-serif; }
.t-u { text-decoration: underline; font-size: 15px; }
.t-abc { text-decoration: line-through; font-size: 14px; }
.t-x { font-size: 16px; }
.t-x sub, .t-x sup { font-size: 10px; color: #3f86d6; line-height: 1; font-weight: bold; }
.t-x sub { align-self: flex-end; margin-bottom: 4px; }
.t-x sup { align-self: flex-start; margin-top: 4px; }
.fontc { display: flex; flex-direction: column; align-items: center; line-height: 1; font-size: 16px; color: #333; width: 20px; }
.fontc span { height: 15px; }
.fontc i { display: block; width: 22px; height: 6px; background: #e50000; }
.pil { font: bold 23px "Liberation Sans", sans-serif; color: #444; }

.styles { width: 645px; height: 71px; margin-top: -3px; background: #fff; border: 1px solid #cfcfcf; border-radius: 5px; display: flex; align-items: flex-start; gap: 11.500px; padding: 7px 0 0 31.500px; position: relative; }
.scard { width: 87px; height: 57px; border-radius: 3px; background: #fafafa; box-shadow: 0 0 0 1px #ececec; display: flex; flex-direction: column; overflow: hidden; position: relative; flex: none; }
.scard.sel { box-shadow: 0 0 0 1px #eef2f7, 0 0 0 4px #a9c2e2, 0 0 0 5px #7ea0cc; border-radius: 4px; }
.prev { height: 37px; display: flex; align-items: center; justify-content: center; font-family: "Lato", sans-serif; white-space: nowrap; overflow: hidden; color: #111; background: #fff; }
.pv-n { font-size: 13px; }
.pv-h1 { font-size: 18px; color: #5b7cb2; justify-content: flex-start; padding-left: 3px; }
.pv-h2 { font-size: 14.500px; color: #5b7cb2; }
.pv-t { font-size: 31px; justify-content: flex-start; padding-left: 3px; }
.pv-s { font-size: 12.500px; color: #666; letter-spacing: 1px; }
.lbl { flex: 1; display: flex; align-items: center; justify-content: center; background: linear-gradient(#f0f0f0, #e8e8e8); font-size: 12px; color: #333; }
.more { position: absolute; right: 7px; top: 28px; }
.pane { margin-left: 1px; margin-top: -1px; width: 56px; display: flex; flex-direction: column; align-items: center; font-size: 14px; line-height: 14.700px; color: #222; text-align: center; }
.pane span { margin-top: 8px; }

/* document */
.docarea { flex: 1; min-height: 0; background: #eeeeee; padding: 0 51px; border-bottom: 1px solid #b8b8b8; }
.page { height: 100%; background: #fff; border-left: 1px solid #dedede; border-right: 1px solid #dedede; padding: 91px 0 0 174px; font-family: "Lato", sans-serif; font-variant-ligatures: none; font-size: 27.800px; line-height: 36.300px; color: #111; -webkit-text-stroke: .3px #111; }
.page p { margin: 0; white-space: nowrap; }
.caretline { display: flex; }
.textcaret { display: block; width: 1px; height: 36px; background: #222; margin-left: -1px; }

/* status */
.status { height: 28px; background: linear-gradient(#e9e9e9, #d2d2d2); display: flex; justify-content: space-between; border-radius: 0 0 5px 5px; font-size: 14.800px; color: #555; }
.st-left { display: flex; align-items: center; padding-left: 29px; }
.sl-b { margin-left: 25px; }
.sl-book { margin-left: 23px; }
.sl-c { margin-left: 29px; font-size: 15.500px; }
.st-right { display: flex; align-items: stretch; padding-right: 30px; }
.vbtn { width: 44px; display: flex; align-items: center; justify-content: center; }
.vbtn.on { background: #b7b7b7; }
.zoomctl { display: flex; align-items: center; margin-left: 9px; }
.z-b { font-size: 20px; font-weight: 700; color: #444; width: 12px; text-align: center; }
.slider { width: 120px; height: 5px; background: #a6a6a6; border-radius: 3px; margin: 0 9px; position: relative; }
.tick { position: absolute; left: 58px; top: 0; width: 3px; height: 5px; background: #ddd; }
.thumb { position: absolute; left: 67px; top: -6px; width: 15px; height: 15px; border-radius: 50%; background: #f4f4f4; box-shadow: 0 0 2px #666; }
.z-v { margin-left: 21px; font-size: 15px; }

/* dock */
.dockrow { height: 60px; background: #181d1a; padding: 0 49px; overflow: hidden; }
.dock { height: 60px; background: #4f5758; display: flex; padding: 6px 0 0 3px; border-radius: 3px 3px 0 0; }
.di { width: 51.700px; display: flex; justify-content: center; position: relative; height: 54px; flex: none; }
.di.run::after { content: ""; position: absolute; left: 50%; bottom: 0; width: 4px; height: 4px; margin-left: -2px; border-radius: 50%; background: #111; }
.di.wide { margin-left: 11px; }
.dsep { width: 1px; height: 46px; margin: 2px 0 0 11px; background: #3a4142; flex: none; }
.cal-m { font-size: 7px; fill: #fff; text-anchor: middle; }
.cal-d { font-size: 22px; fill: #222; text-anchor: middle; }
.ppt-p { font-size: 20px; fill: #fff; font-weight: bold; }
.ppt-s { font-size: 12px; fill: #fff; font-weight: bold; }
.w-w { font-size: 18px; fill: #fff; font-weight: bold; }

.cursor { position: absolute; left: 1117px; top: 337px; filter: blur(.3px); }
```
